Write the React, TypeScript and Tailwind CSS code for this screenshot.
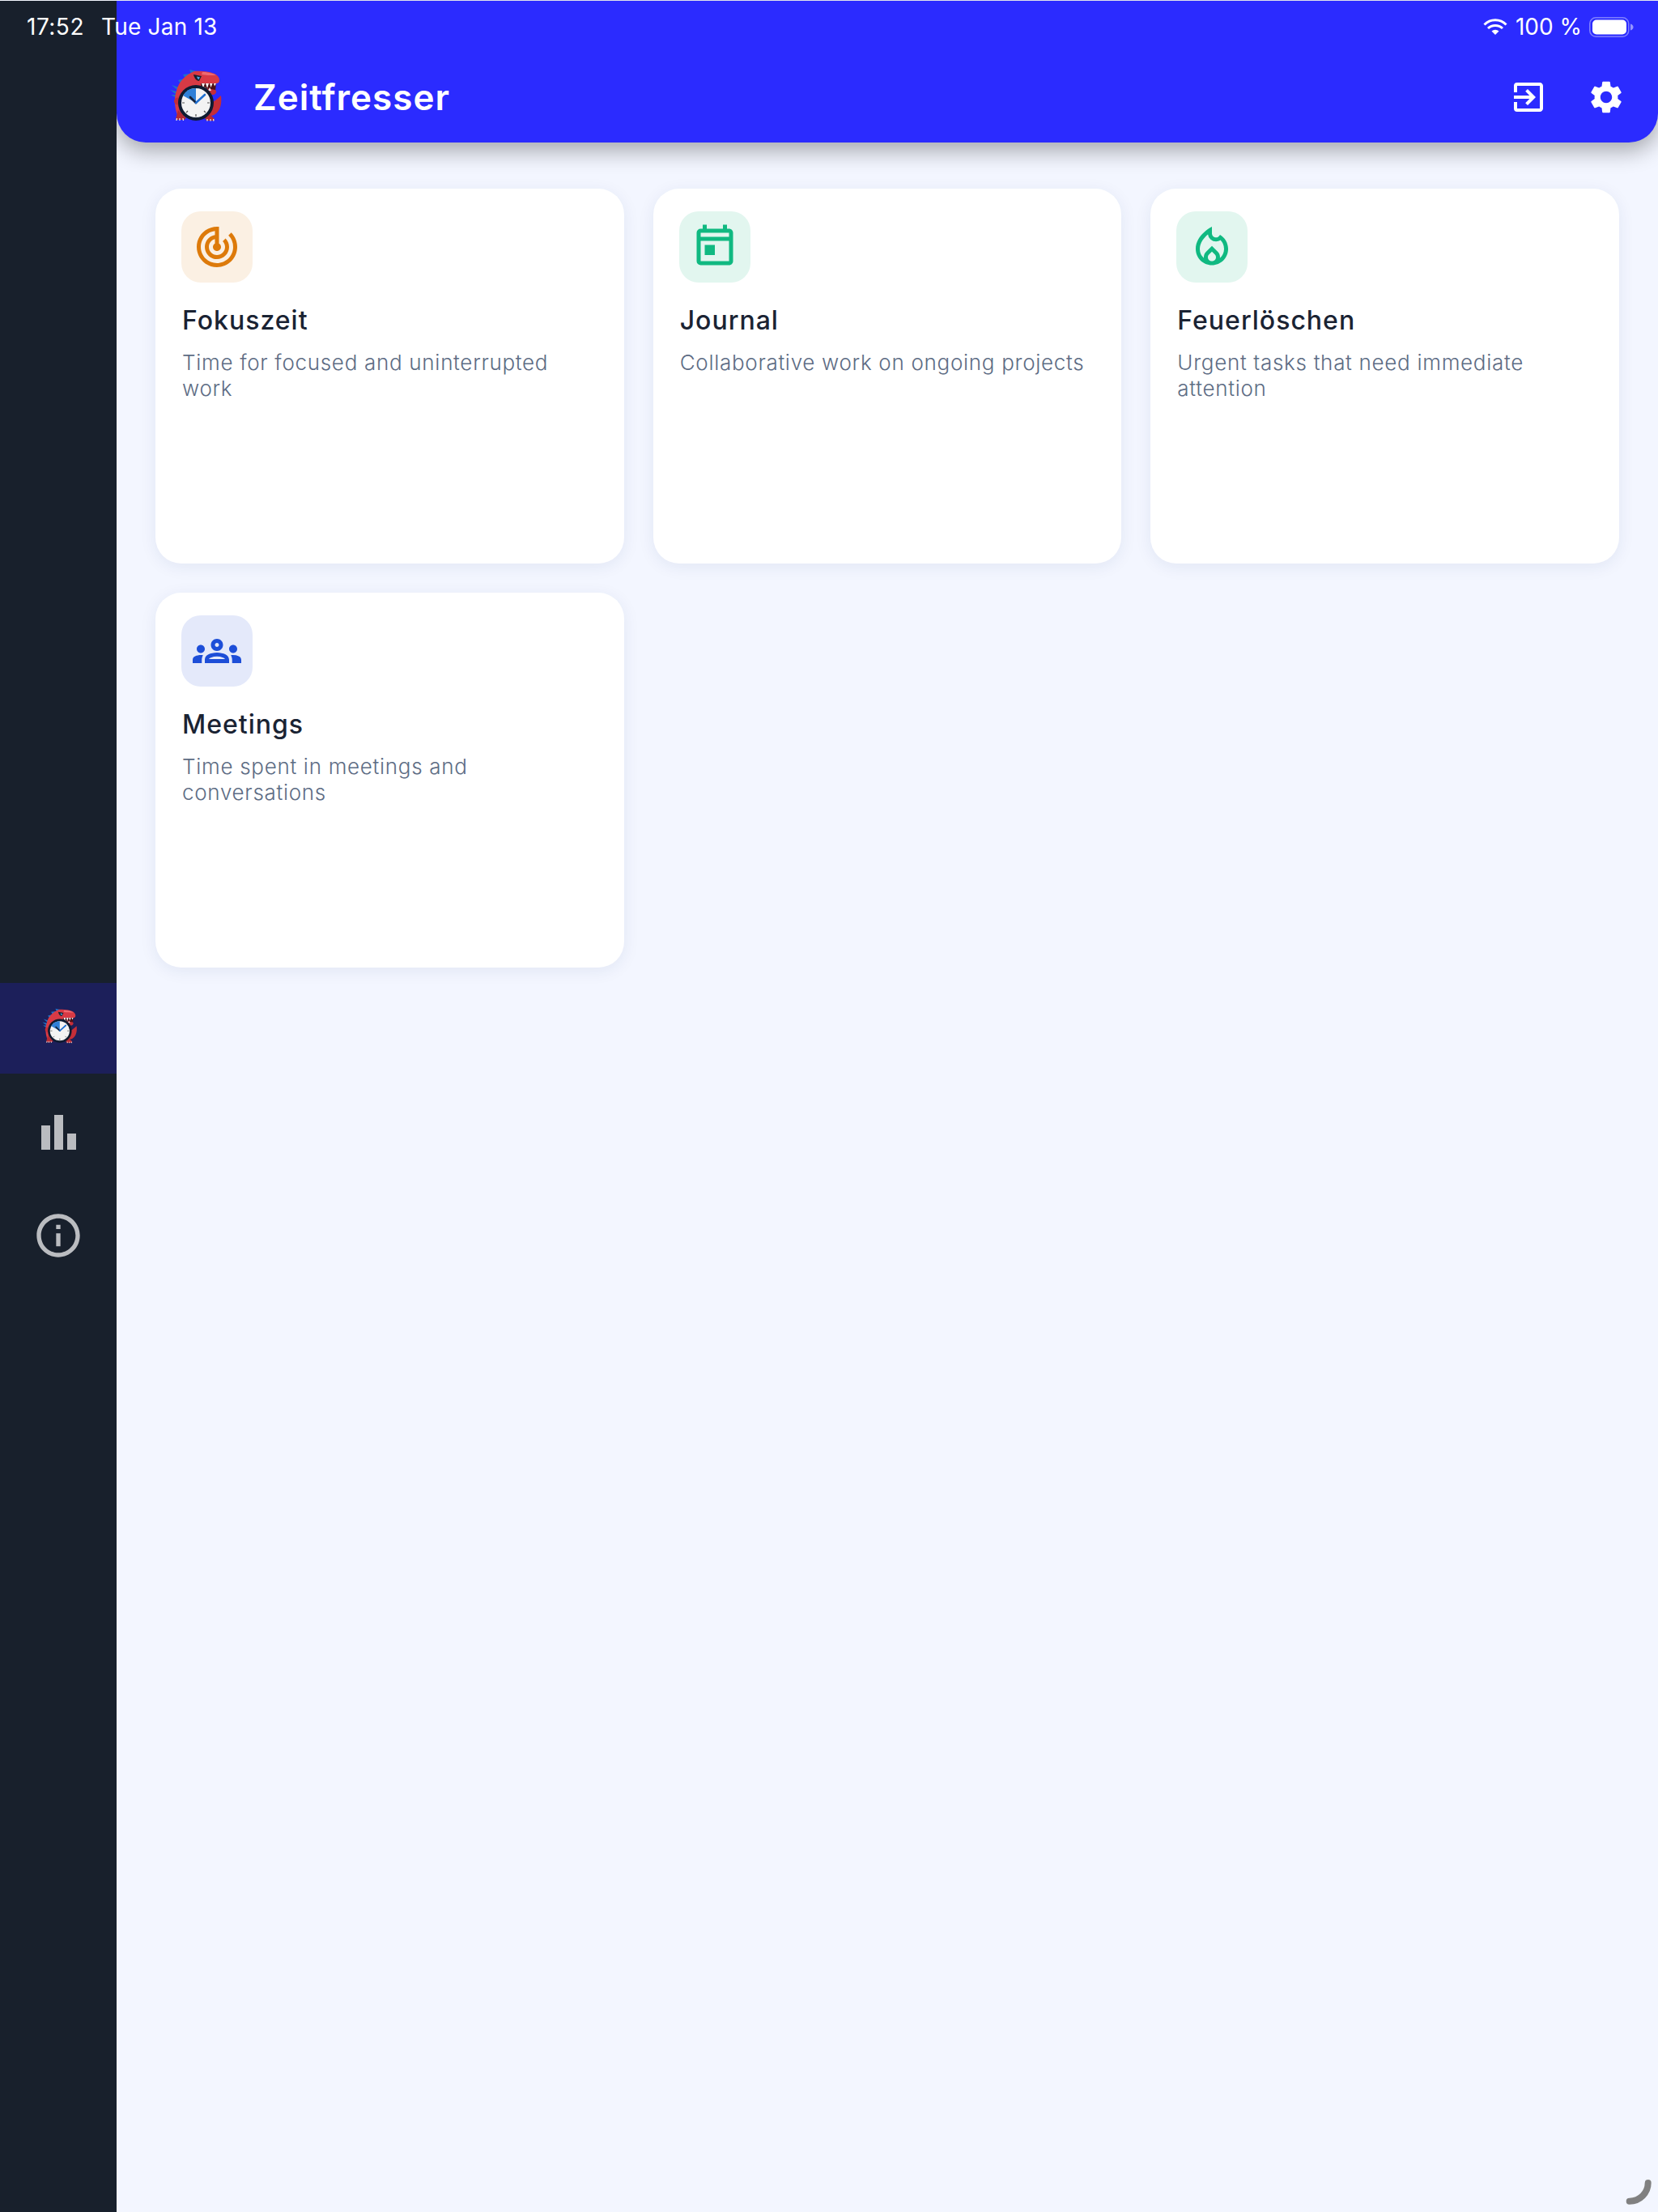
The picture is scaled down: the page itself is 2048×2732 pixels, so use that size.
import { MdExitToApp, MdSettings, MdOutlineInfo, MdTrackChanges, MdOutlineToday, MdOutlineLocalFireDepartment, MdOutlineGroups } from "react-icons/md";

const Mascot = ({ className }: { className: string }) => (
  <svg viewBox="0 0 100 100" className={className}>
    {/* back spikes */}
    <g fill="#1f72c8">
      <path d="M22 35l9 3-1 4z" />
      <path d="M20 41l9 2-1 4z" />
      <path d="M21 47l8 0-1 4z" />
      <path d="M30 29l8-2-3 9z" />
      <path d="M36 22l9-1-5 8z" />
      <path d="M44 16l9 2-6 5z" />
    </g>
    {/* tail */}
    <path d="M68 58c6-2 11-6 15-10 1 8 0 15-4 20-2 3-6 5-10 5z" fill="#c42e38" />
    {/* body, neck and head */}
    <path d="M30 74C25 64 25 50 28 42 31 30 40 22 50 18c7-1 18 0 25 3 4 2 6 5 6 8 0 3-2 4-4 4L60 34c-2 2-2 6-2 10l-14 4-6 26z" fill="#d83a45" />
    <path d="M60 19c6 0 13 1 17 4-6 0-13 0-18-1z" fill="#ee6a70" />
    {/* mouth */}
    <path d="M58 33l19 0-1 9-18-4z" fill="#4d1116" />
    <path d="M57 38l19 3c2 2 1 5-2 6l-14 0-5-3z" fill="#c42e38" />
    {/* eye */}
    <path d="M49 22l10 2-3 6c-3 0-6-3-7-8z" fill="#16202e" />
    <path d="M53 24.5l4 .8-1.5 3c-1 0-2-2-2.5-3.8z" fill="#4aa3e0" />
    {/* teeth */}
    <g fill="#f6f6f6">
      <path d="M59 33l2 6 2-6z" />
      <path d="M64 33l2 6 2-6z" />
      <path d="M69 33l1.5 5 2-5z" />
      <path d="M74 33l1 3.5 2-3.5z" />
      <path d="M61 41l2-4 2 4z" />
      <path d="M67 42l2-4 2 4z" />
    </g>
    {/* feet and hand */}
    <path d="M30 66l10 10-3 2h-9l-1-1z" fill="#b52a33" />
    <path d="M66 68l9 9-1 2h-9l-3-5z" fill="#b52a33" />
    <path d="M28.5 76l-.5 3M32 76l0 3M36 76l.5 3M66 77l0 2.5M70 77l0 2.5M73.5 77l.5 2.5" stroke="#e8e8e8" strokeWidth="1.3" />
    <ellipse cx="30" cy="55" rx="5" ry="4.5" fill="#c42e38" />
    {/* clock */}
    <circle cx="52" cy="57" r="22" fill="#0f1b30" />
    <circle cx="52" cy="57" r="18" fill="#f3f3f3" />
    <path d="M52 57L36 48a18 18 0 0 1 16-9z" fill="#2f80d8" />
    <path d="M52 57L45 50" stroke="#17233a" strokeWidth="2.6" strokeLinecap="round" />
    <path d="M52 57L63 47" stroke="#1f6fd0" strokeWidth="2.6" strokeLinecap="round" />
    <path d="M52 71v3M38 57h-3M69 57h-3M42 67l-2 2M62 67l2 2" stroke="#555" strokeWidth="1.2" />
  </svg>
);

const cards = [
  { title: "Fokuszeit", desc: "Time for focused and uninterrupted work", icon: MdTrackChanges, box: "bg-[#fbf0e3]", color: "text-[#dd7a0a]" },
  { title: "Journal", desc: "Collaborative work on ongoing projects", icon: MdOutlineToday, box: "bg-[#e2f6ef]", color: "text-[#10b981]" },
  { title: "Feuerlöschen", desc: "Urgent tasks that need immediate attention", icon: MdOutlineLocalFireDepartment, box: "bg-[#e2f6ef]", color: "text-[#10b981]" },
  { title: "Meetings", desc: "Time spent in meetings and conversations", icon: MdOutlineGroups, box: "bg-[#e4e9fa]", color: "text-[#1d4ed8]" },
];

const App = () => {
  return (
    <div className="relative w-[2048px] h-[2732px] overflow-hidden bg-[#f3f6ff] font-['Inter',sans-serif] pt-px">
      <div className="flex h-full">
        {/* Sidebar */}
        <nav className="relative z-10 w-[144px] shrink-0 bg-[#18202c] pt-[63px] flex flex-col justify-center gap-4">
          <div className="h-[112px] bg-[#1c1f5a] flex items-center justify-center pb-1">
            <Mascot className="w-[67px] h-[67px]" />
          </div>
          <div className="h-[112px] flex items-end justify-center gap-[5px] pb-[34px]">
            <div className="w-[11px] h-[30px] bg-[#babcc0]" />
            <div className="w-[11px] h-[43px] bg-[#babcc0]" />
            <div className="w-[11px] h-[20px] bg-[#babcc0]" />
          </div>
          <div className="h-[112px] flex items-center justify-center text-[#babcc0]">
            <MdOutlineInfo className="w-16 h-16" />
          </div>
        </nav>

        <main className="flex-1 min-w-0">
          {/* App bar */}
          <header className="h-[175px] bg-[#2b2bff] rounded-b-[36px] shadow-[0_10px_28px_rgba(0,0,0,0.33)] pt-[63px] pl-[46px] pr-10 flex items-center text-white">
            <Mascot className="w-[100px] h-[100px]" />
            <h1 className="ml-[23px] text-[44px] leading-none font-semibold tracking-[1px]">Zeitfresser</h1>
            <div className="ml-auto flex items-center gap-12">
              <MdExitToApp className="w-12 h-12" />
              <MdSettings className="w-12 h-12" />
            </div>
          </header>

          {/* Activity grid */}
          <div className="grid grid-cols-3 gap-9 px-12 pt-[57px]">
            {cards.map((card) => (
              <div key={card.title} className="aspect-[5/4] bg-white rounded-[32px] shadow-[0_4px_20px_rgba(30,50,120,0.08)] px-8 pt-7">
                <div className={`w-[88px] h-[88px] rounded-[24px] flex items-center justify-center ${card.box}`}>
                  <card.icon className={`w-[60px] h-[60px] ${card.color}`} />
                </div>
                <h2 className="mt-[27px] ml-px text-[32px] leading-[40px] font-medium tracking-[1px] text-[#1a2333]">{card.title}</h2>
                <p className="mt-4 ml-px text-[26px] leading-[32px] font-light tracking-[0.7px] text-[#5d6c84]">{card.desc}</p>
              </div>
            ))}
          </div>
        </main>
      </div>

      {/* Status bar */}
      <div className="absolute z-20 top-px inset-x-0 h-[64px] pl-[33px] pr-[30px] flex items-center text-white text-[28px]">
        <span className="tracking-[0.5px]">17:52</span>
        <span className="ml-[21px] tracking-[0.2px]">Tue Jan 13</span>
        <div className="ml-auto flex items-center">
          <svg viewBox="0 0 30 20" className="w-[30px] h-5 mr-[10px]" fill="none" stroke="white" strokeWidth="3">
            <path d="M1.5 7.5a19 19 0 0 1 27 0" />
            <path d="M6 12a13 13 0 0 1 18 0" />
            <path d="M15 20l-4.5-4.5a6.5 6.5 0 0 1 9 0z" fill="white" stroke="none" />
          </svg>
          <span>100 %</span>
          <svg viewBox="0 0 55 25" className="ml-[9px] w-[55px] h-[25px]">
            <rect x="0.75" y="0.75" width="48" height="23.5" rx="7.5" fill="none" stroke="white" strokeOpacity="0.4" strokeWidth="1.5" />
            <rect x="4" y="3.5" width="42" height="18" rx="5" fill="white" />
            <path d="M51 8.5c2 .5 3.5 2 3.5 4s-1.5 3.5-3.5 4z" fill="white" fillOpacity="0.5" />
          </svg>
        </div>
      </div>

      {/* Corner handle */}
      <svg viewBox="0 0 40 40" className="absolute right-0 bottom-0 w-10 h-10" fill="none" stroke="#808080" strokeWidth="8" strokeLinecap="round">
        <path d="M27.7 4C27.7 16 18 26.7 4.7 26.7" />
      </svg>
    </div>
  );
};

export default App;
